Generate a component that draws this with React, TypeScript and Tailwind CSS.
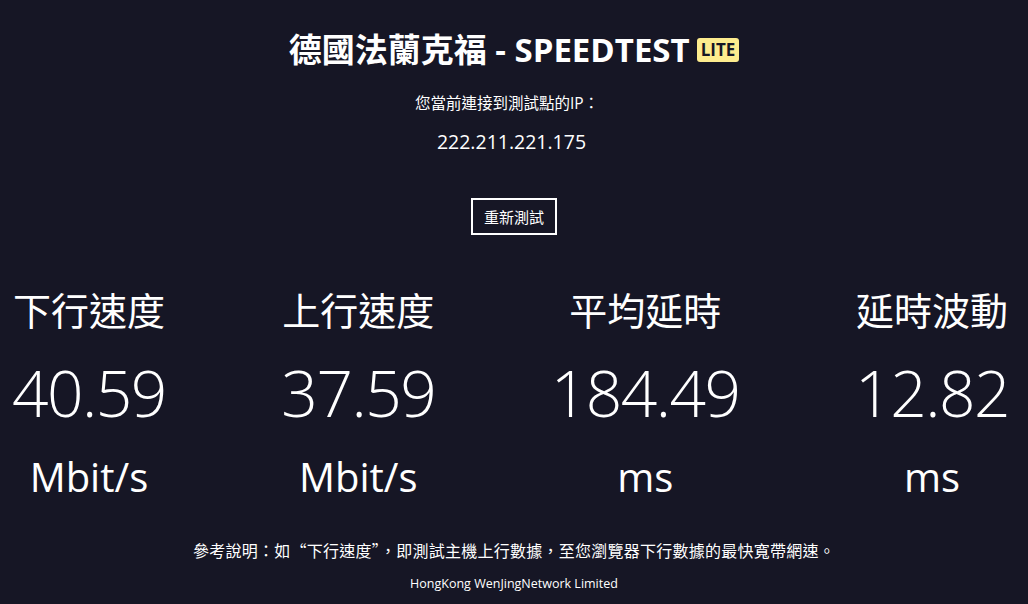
export default function App() {
  const stats = [
    { label: "下行速度", value: "40.59", unit: "Mbit/s" },
    { label: "上行速度", value: "37.59", unit: "Mbit/s" },
    { label: "平均延時", value: "184.49", unit: "ms" },
    { label: "延時波動", value: "12.82", unit: "ms" },
  ];

  return (
    <div
      className="flex h-[604px] w-full flex-col items-center overflow-hidden bg-[#161625] text-white"
      style={{ fontFamily: '"Open Sans", "Noto Sans CJK TC", sans-serif' }}
    >
      {/* Header */}
      <h1 className="mt-[27px] flex items-center text-[33px] font-bold leading-[46px]">
        <span>德國法蘭克福 - SPEEDTEST</span>
        <span className="ml-[7px] rounded-[3px] bg-[#fdec8e] px-[4px] text-[17px] font-bold leading-[24px] text-[#161625]">
          LITE
        </span>
      </h1>
      <p className="mt-[19px] pr-[14px] text-[15.5px] leading-[22px]">您當前連接到測試點的IP：</p>
      <p className="mt-[16px] pr-[5px] text-[19.5px] leading-[24px]">222.211.221.175</p>

      <button className="mt-[44px] h-[37px] border-2 border-white px-[11px] text-[15px] leading-[20px] text-white">
        重新測試
      </button>

      {/* Stats */}
      <div className="mt-[49px] flex w-full justify-between pl-[12px] pr-[19px]">
        {stats.map((s) => (
          <div key={s.label} className="flex flex-col items-center">
            <div className="text-[38px] leading-[52px]">{s.label}</div>
            <div className="mt-[17px] text-[64px] font-light leading-[80px] tracking-[-1.5px]">
              {s.value}
            </div>
            <div className="mt-[16px] text-[40px] leading-[56px]">{s.unit}</div>
          </div>
        ))}
      </div>

      {/* Footer */}
      <p
        className="mt-[34px] text-[16px] leading-[22px] tracking-[0.25px]"
        style={{ fontFamily: '"Noto Sans CJK TC", sans-serif' }}
      >
        參考說明：如“下行速度”，即測試主機上行數據，至您瀏覽器下行數據的最快寬帶網速。
      </p>
      <p className="mt-[14px] text-[12.5px] leading-[18px]">HongKong WenJingNetwork Limited</p>
    </div>
  );
}
